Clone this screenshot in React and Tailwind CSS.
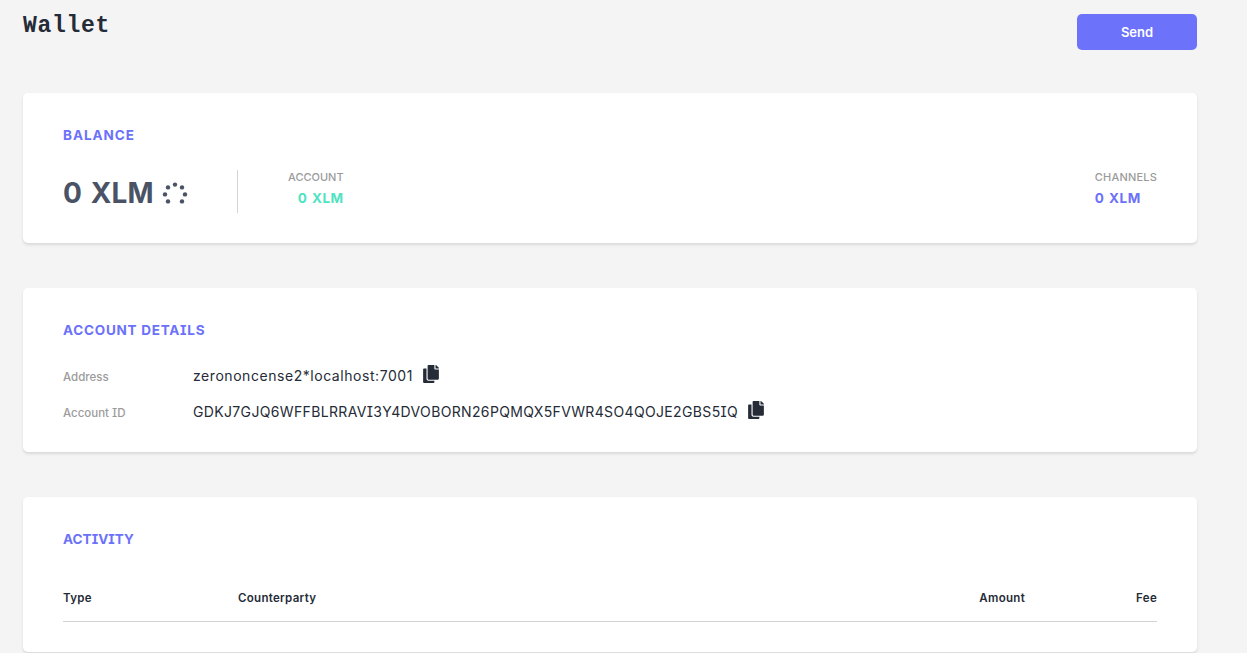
import { FaCopy } from "react-icons/fa";

const details = [
  { label: "Address", value: "zerononcense2*localhost:7001", spacing: "tracking-[0.55px]" },
  {
    label: "Account ID",
    value: "GDKJ7GJQ6WFFBLRRAVI3Y4DVOBORN26PQMQX5FVWR4SO4QOJE2GBS5IQ",
    spacing: "tracking-[0.35px]",
  },
];

const dots = [
  [12, 2.6],
  [19, 5.4],
  [22, 12.4],
  [19, 19.4],
  [5, 19.4],
  [2, 12.4],
  [5, 5.4],
];

const Spinner = () => (
  <svg width="24" height="24" viewBox="0 0 24 24" className="mt-0.5 overflow-visible fill-[#4a5365]">
    {dots.map(([cx, cy]) => (
      <circle key={`${cx}-${cy}`} cx={cx} cy={cy} r="2.2" />
    ))}
  </svg>
);

const Card = ({ title, spacing = "tracking-[0.75px]", className, children }) => (
  <section className={`rounded-[5px] bg-white px-10 pt-8 shadow-[0_2px_3px_rgba(0,0,0,0.11)] ${className}`}>
    <h2 className={`text-[13.5px] leading-[21px] font-bold text-[#6c71fa] uppercase ${spacing}`}>{title}</h2>
    {children}
  </section>
);

const App = () => {
  return (
    <div className="h-[653px] overflow-hidden bg-[#f4f4f4] pr-[50px] pl-[23px] font-['Inter',sans-serif] text-[#252b37] [font-feature-settings:'cv08']">
      <header className="flex h-[93px] items-start justify-between">
        <h1 className="mt-2.5 font-['Liberation_Mono',monospace] text-[23px] leading-8 font-bold tracking-[0.7px]">Wallet</h1>
        <button className="mt-3.5 h-9 w-[120px] rounded-[5px] bg-[#6d72fb] pt-0.5 text-[13px] font-semibold text-white">
          Send
        </button>
      </header>

      <Card title="Balance" spacing="tracking-[0.95px]" className="h-[150px]">
        <div className="mt-6 flex h-[43px] items-start">
          <div className="flex h-[43px] w-[175px] items-center gap-[9px] border-r border-[#d4d4d4] pt-0.5">
            <span className="text-[28px] font-bold tracking-[0.1px] text-[#4a5365] [word-spacing:2px]">0 XLM</span>
            <Spinner />
          </div>
          <div className="ml-[50px] text-right">
            <div className="text-[11px] leading-[14px] font-medium text-[#9b9b9b]">ACCOUNT</div>
            <div className="mt-1 text-[13.5px] leading-5 font-bold tracking-[0.5px] [word-spacing:1px] text-[#50e3c2]">0 XLM</div>
          </div>
          <div className="ml-auto">
            <div className="text-[11px] leading-[14px] font-medium tracking-[0.2px] text-[#9b9b9b]">CHANNELS</div>
            <div className="mt-1 text-[13.5px] leading-5 font-bold tracking-[0.5px] [word-spacing:1px] text-[#6c71fa]">0 XLM</div>
          </div>
        </div>
      </Card>

      <Card title="Account Details" className="mt-[45px] h-[164px]">
        <div className="mt-[17px]">
          {details.map((row) => (
            <div key={row.label} className="flex h-9 items-center">
              <span className="w-[130px] pt-[3px] text-[11.5px] font-medium text-[#9b9b9b]">{row.label}</span>
              <span className={`pb-px text-[14px] ${row.spacing}`}>{row.value}</span>
              <FaCopy className="mb-1 ml-2.5 h-[18px] w-4" />
            </div>
          ))}
        </div>
      </Card>

      <Card title="Activity" spacing="tracking-[0.05px]" className="mt-[45px] h-[155px]">
        <table className="mt-[34px] w-full table-fixed text-[11.5px] tracking-[0.3px]">
          <thead>
            <tr className="h-[37px] border-b border-[#d4d4d4] text-left align-top leading-7">
              <th className="w-[175px] font-semibold">Type</th>
              <th className="font-semibold">Counterparty</th>
              <th className="w-[132px] text-right font-semibold">Amount</th>
              <th className="w-[132px] text-right font-semibold">Fee</th>
            </tr>
          </thead>
        </table>
      </Card>
    </div>
  );
};

export default App;
